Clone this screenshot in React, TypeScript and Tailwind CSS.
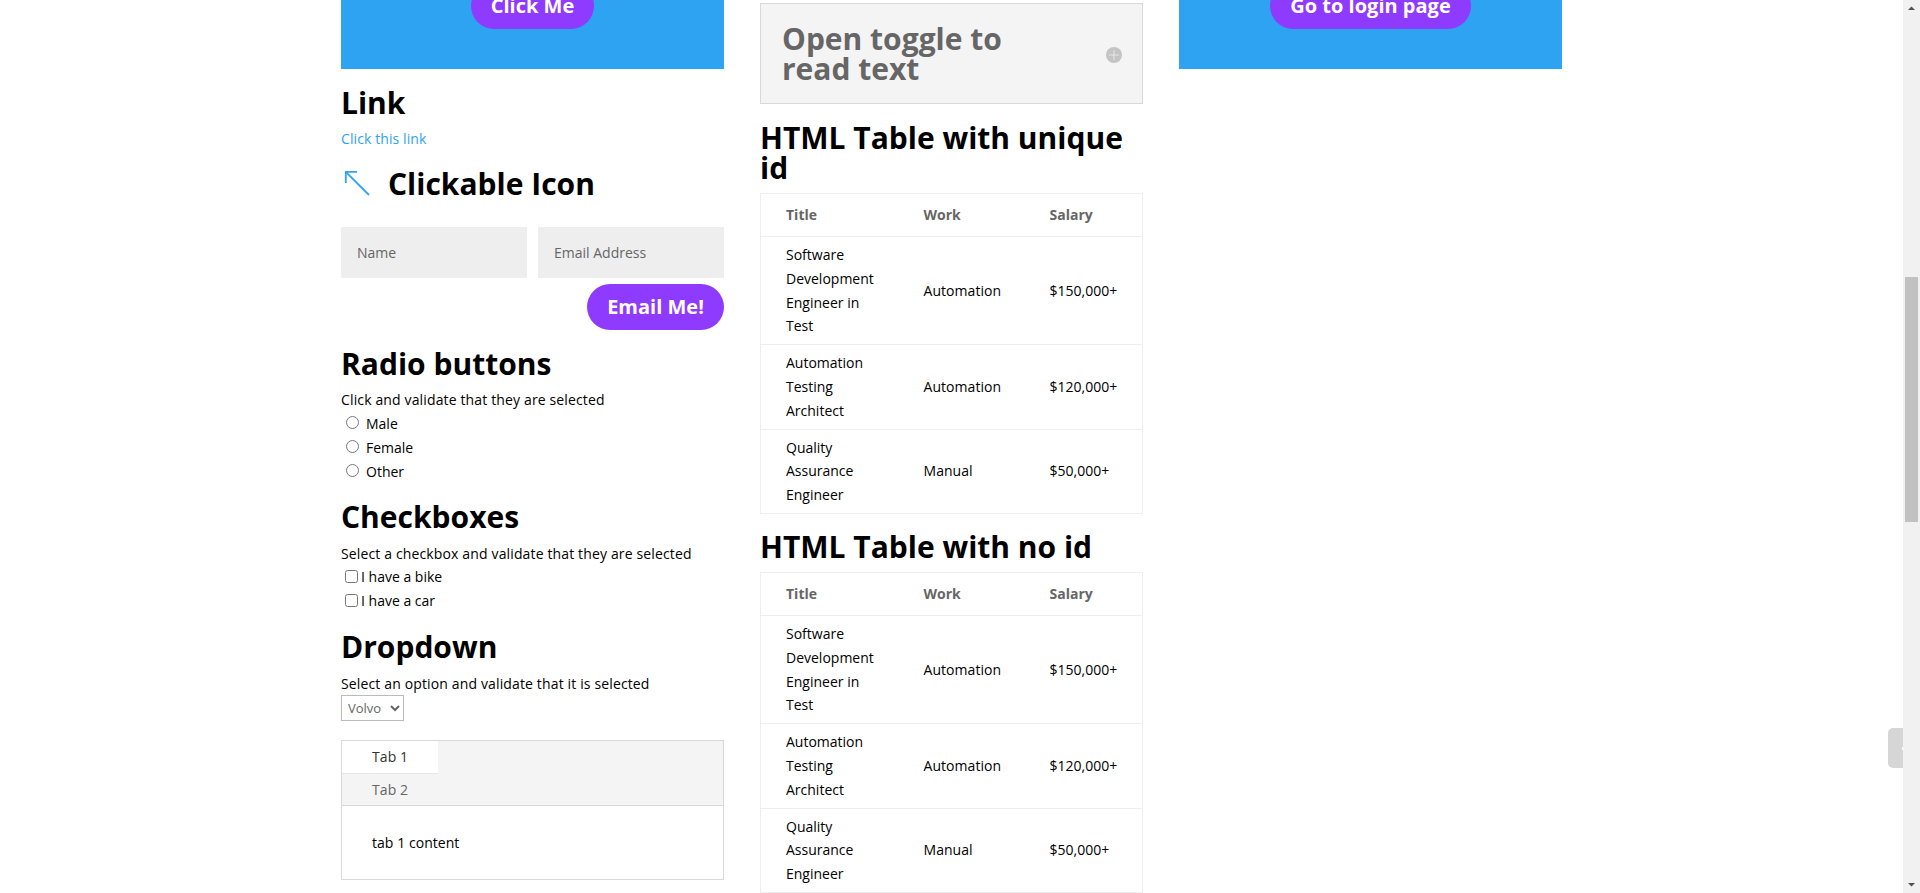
const rows = [
  { title: 'Software Development Engineer in Test', work: 'Automation', salary: '$150,000+' },
  { title: 'Automation Testing Architect', work: 'Automation', salary: '$120,000+' },
  { title: 'Quality Assurance Engineer', work: 'Manual', salary: '$50,000+' },
];

function Heading({ children, className = '' }: { children: React.ReactNode; className?: string }) {
  return <h2 className={`text-[30px] leading-[30px] font-bold text-black ${className}`}>{children}</h2>;
}

function CallToAction({ label, buttonClass }: { label: string; buttonClass: string }) {
  return (
    <div className="h-[69px] bg-[#2ea3f2] flex justify-center items-start">
      {/* page is scrolled, so the top of the button sits above the fold */}
      <button className={`h-[46px] -mt-[17px] shrink-0 rounded-[23px] bg-[#8f3aff] text-white text-[20px] font-bold ${buttonClass}`}>
        {label}
      </button>
    </div>
  );
}

function JobTable() {
  return (
    <table className="w-full table-fixed border-collapse border border-[#eeeeee]">
      <colgroup>
        <col className="w-[163px]" />
        <col className="w-[126px]" />
        <col />
      </colgroup>
      <thead>
        <tr className="h-[43px] border-b border-[#eeeeee]">
          <th className="pl-[25px] text-left font-bold text-[#666666]">Title</th>
          <th className="text-left font-bold text-[#666666]">Work</th>
          <th className="text-left font-bold text-[#666666]">Salary</th>
        </tr>
      </thead>
      <tbody>
        {rows.map((row) => (
          <tr key={row.title} className="border-b border-[#eeeeee]">
            <td className="pl-[25px] pr-[46px] py-[6px]">{row.title}</td>
            <td className="py-[6px] tracking-[0.05px]">{row.work}</td>
            <td className="py-[6px]">{row.salary}</td>
          </tr>
        ))}
      </tbody>
    </table>
  );
}

export default function App() {
  return (
    <div className="h-screen overflow-hidden flex bg-white text-black text-[14px] leading-[23.8px] font-['Open_Sans',sans-serif]">
      <div className="relative flex-1 flex justify-center gap-[36px]">
        {/* left column */}
        <div className="w-[383px] flex flex-col">
          <CallToAction label="Click Me" buttonClass="w-[123px]" />
          <Heading className="mt-[19px]">Link</Heading>
          <a className="mt-[9px] tracking-[0.1px] text-[#2ea3f2]" href="#">Click this link</a>

          <div className="mt-[18px] flex items-center h-[31px]">
            <svg className="w-[30px] h-[30px] ml-[2px]" viewBox="0 0 30 30" fill="none" stroke="#2ea3f2" strokeWidth="1.8">
              <path d="M2.8 2.8 L26 26" />
              <path d="M2.8 14 V2.8 H14" />
            </svg>
            <span className="ml-[15px] text-[30px] leading-[30px] font-bold">Clickable Icon</span>
          </div>

          <div className="mt-[27px] flex gap-[11px]">
            <input className="w-[186px] h-[51px] bg-[#eeeeee] px-[16px] placeholder:text-[#666666]" placeholder="Name" />
            <input className="w-[186px] h-[51px] bg-[#eeeeee] px-[16px] placeholder:text-[#666666]" placeholder="Email Address" />
          </div>
          <div className="mt-[6px] flex justify-end">
            <button className="w-[137px] h-[46px] rounded-[23px] bg-[#8f3aff] text-white text-[20px] font-bold">Email Me!</button>
          </div>

          <Heading className="mt-[19px]">Radio buttons</Heading>
          <p className="mt-[9px] tracking-[0.14px]">Click and validate that they are selected</p>
          {['Male', 'Female', 'Other'].map((name) => (
            <label key={name} className="flex items-center h-[24px] pl-[5px]">
              <input type="radio" name="gender" className="m-0 w-[13px] h-[13px] -translate-y-[1px]" />
              <span className="ml-[7px]">{name}</span>
            </label>
          ))}

          <Heading className="mt-[18px]">Checkboxes</Heading>
          <p className="mt-[10px] tracking-[0.14px]">Select a checkbox and validate that they are selected</p>
          {['I have a bike', 'I have a car'].map((name) => (
            <label key={name} className="flex items-center h-[24px] pl-[4px]">
              <input type="checkbox" className="m-0 w-[13px] h-[13px] -translate-y-[1px]" />
              <span className="ml-[3px]">{name}</span>
            </label>
          ))}

          <Heading className="mt-[19px]">Dropdown</Heading>
          <p className="mt-[10px] tracking-[0.14px]">Select an option and validate that it is selected</p>
          <select className="mt-[-1px] w-[63px] h-[26px] border border-[#bbbbbb] text-[#666666] text-[13px] pl-[2px] appearance-auto">
            <option>Volvo</option>
          </select>

          <div className="mt-[19px] h-[140px] border border-[#d9d9d9] flex flex-col">
            <div className="bg-[#f4f4f4] border-b border-[#d9d9d9]">
              <div className="w-[96px] h-[33px] bg-white border-b border-[#e5e5e5] pl-[30px] flex items-center text-[#333333] font-medium tracking-[0.1px]">Tab 1</div>
              <div className="h-[31px] pl-[30px] flex items-center text-[#666666] font-medium tracking-[0.1px]">Tab 2</div>
            </div>
            <div className="flex-1 pl-[30px] flex items-center tracking-[0.05px]">tab 1 content</div>
          </div>
        </div>

        {/* middle column */}
        <div className="w-[383px] flex flex-col pt-[3px]">
          <div className="h-[102px] border border-[#d9d9d9] bg-[#f4f4f4] pl-[21px] pr-[20px] flex items-center justify-between">
            <span className="w-[260px] text-[30px] leading-[30px] font-bold text-[#666666]">Open toggle to read text</span>
            <svg className="w-[16px] h-[16px] translate-y-px" viewBox="0 0 16 16">
              <circle cx="8" cy="8" r="8" fill="#c4c4c4" />
              <path d="M3 8 H13 M8 3 V13" stroke="#e6e6e6" strokeWidth="1" />
            </svg>
          </div>
          <Heading className="mt-[19px]">HTML Table with unique id</Heading>
          <div className="mt-[10px]"><JobTable /></div>
          <Heading className="mt-[18px]">HTML Table with no id</Heading>
          <div className="mt-[10px]"><JobTable /></div>
        </div>

        {/* right column */}
        <div className="w-[383px] flex flex-col">
          <CallToAction label="Go to login page" buttonClass="w-[201px]" />
        </div>

        {/* scroll to top tab */}
        <div className="absolute right-0 top-[728px] w-[15px] h-[40px] rounded-l-[5px] bg-[#d6d6d6] flex items-center justify-end">
          <div className="w-[1px] h-[3px] bg-white" />
        </div>
      </div>

      {/* browser scrollbar */}
      <div className="w-[17px] h-full bg-[#f1f1f1] flex flex-col items-center">
        <svg className="w-[17px] h-[17px] shrink-0" viewBox="0 0 17 17"><path d="M5 10 L8.5 6.5 L12 10 Z" fill="#505050" /></svg>
        <div className="mt-[260px] w-[13px] h-[245px] bg-[#c1c1c1] shrink-0" />
        <svg className="mt-auto w-[17px] h-[17px] shrink-0" viewBox="0 0 17 17"><path d="M5 7 L8.5 10.5 L12 7 Z" fill="#505050" /></svg>
      </div>
    </div>
  );
}
